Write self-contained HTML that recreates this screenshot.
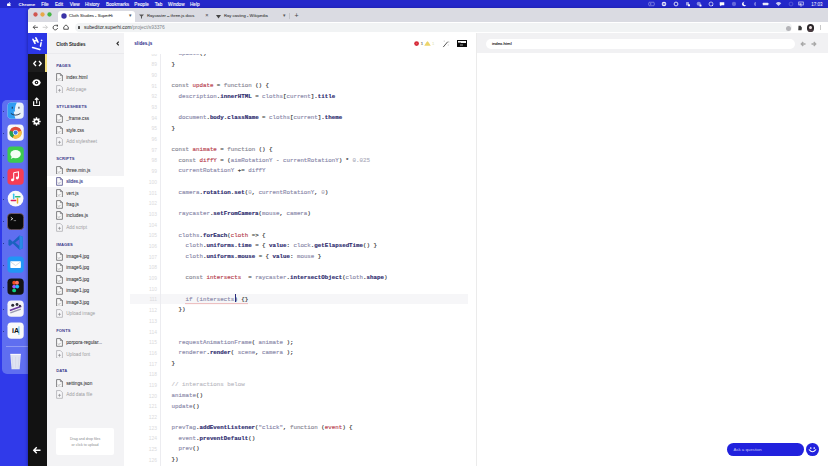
<!DOCTYPE html><html><head><meta charset="utf-8"><style>
*{margin:0;padding:0;box-sizing:border-box}
html,body{width:828px;height:466px;overflow:hidden}
body{background:#303aea;font-family:"Liberation Sans",sans-serif;position:relative}
#root{left:0;top:0;width:828px;height:466px}
div,span,svg{position:absolute}
.t{white-space:nowrap;line-height:1}
#menubar{left:0;top:0;width:828px;height:8px;background:#2428ca;color:#fff}
#menubar .t{font-size:4.65px;top:3.0px}
#dock{left:1.5px;top:99.8px;width:40px;height:274.6px;border-radius:5px;background:#5f6ef0}
.di{left:5.5px;width:17.5px;height:17.5px;border-radius:4px;overflow:hidden}
#win{left:28px;top:8px;width:800px;height:458px;background:#fff;border-top-left-radius:4px;overflow:hidden;box-shadow:-1px 0 3px rgba(0,0,60,.3)}
#tabs{left:0;top:0;width:800px;height:14px;background:#dadbe2}
#toolbar{left:0;top:14px;width:800px;height:11px;background:#fff}
#content{left:0;top:26px;width:800px;height:432px;background:#fff;overflow:visible}
#iconbar{left:0;top:0;width:19px;height:432px;background:#121212}
#logo{left:0;top:0;width:19px;height:20px;background:#2b36e6}
#sidebar{left:19px;top:0;width:77px;height:432px;background:#f3f3f5}
#editor{left:96px;top:0;width:352px;height:432px;background:#fff;overflow:hidden}
#preview{left:448px;top:0;width:352px;height:432px;background:#fff;border-left:1px solid #ebebeb}
.sh{font-size:4.1px;font-weight:bold;color:#3b3a8c;letter-spacing:0.1px}
.si{font-size:4.7px;color:#36363a;-webkit-text-stroke:0.06px #36363a}
.sa{font-size:4.7px;color:#9c9ca0}
.code span{position:static}
.code{font-family:"Liberation Mono",monospace;font-size:5.8px;line-height:1;white-space:pre;-webkit-text-stroke:0.15px currentColor}
.ln{font-family:"Liberation Sans",sans-serif;font-size:4.9px;color:#dadadc;text-align:right;width:20px;line-height:1}
.k{color:#8a8a96}
.d{color:#b84452}
.p{color:#2d2b6e;font-weight:bold}
.i{color:#8c8bab}
.o{color:#333}
.n{color:#b0b0c0}
.c{color:#bdbdc5}
.s{color:#8584a8}
</style></head><body><div id="root">
<div id="menubar">
<svg style="left:7px;top:1.600px" width="4" height="4.8" viewBox="0 0 10 12"><path fill="#fff" d="M8.3 6.4c0-1.5 1.2-2.2 1.3-2.3-.7-1-1.8-1.2-2.2-1.2-.9-.1-1.8.6-2.3.6s-1.2-.5-2-.5C2 3 1 3.6.5 4.600-.6 6.600.2 9.500 1.200 11c.5.7 1.1 1.500 1.900 1.500.8 0 1-.5 2-.5s1.200.5 2 .5 1.300-.7 1.800-1.500c.6-.8.800-1.600.8-1.700 0 0-1.600-.6-1.600-2.500zM6.800 1.900C7.200 1.400 7.500.7 7.400 0c-.6 0-1.400.4-1.800.9-.4.4-.7 1.100-.6 1.800.7.1 1.400-.3 1.800-.8z"/></svg>
<span class="t" style="left:18.6px;font-weight:bold;font-size:4.4px;">Chrome</span>
<span class="t" style="left:41.2px;font-size:4.65px;-webkit-text-stroke:0.1px #fff;">File</span>
<span class="t" style="left:55.0px;font-size:4.65px;-webkit-text-stroke:0.1px #fff;">Edit</span>
<span class="t" style="left:69.7px;font-size:4.65px;-webkit-text-stroke:0.1px #fff;">View</span>
<span class="t" style="left:85.0px;font-size:4.65px;-webkit-text-stroke:0.1px #fff;">History</span>
<span class="t" style="left:105.9px;font-size:4.65px;-webkit-text-stroke:0.1px #fff;">Bookmarks</span>
<span class="t" style="left:134.3px;font-size:4.65px;-webkit-text-stroke:0.1px #fff;">People</span>
<span class="t" style="left:154.8px;font-size:4.65px;-webkit-text-stroke:0.1px #fff;">Tab</span>
<span class="t" style="left:168.0px;font-size:4.65px;-webkit-text-stroke:0.1px #fff;">Window</span>
<span class="t" style="left:190.0px;font-size:4.65px;-webkit-text-stroke:0.1px #fff;">Help</span>
<svg style="left:648.2px;top:1px" width="7.0" height="6" viewBox="0 0 14 12"><rect x="1.500" y="2.500" width="11" height="7" rx="1.500" fill="none" stroke="rgba(255,255,255,.6)" stroke-width="1.200"/><circle cx="5.500" cy="6" r="1.300" fill="rgba(255,255,255,.6)"/></svg>
<svg style="left:660.5px;top:1px" width="6.0" height="6" viewBox="0 0 12 12"><circle cx="6" cy="6" r="4.600" fill="rgba(255,255,255,.9)"/><rect x="3.500" y="4.800" width="5" height="2.400" fill="#3a3ad0"/></svg>
<svg style="left:672.6px;top:1px" width="6.0" height="6" viewBox="0 0 12 12"><circle cx="6" cy="6" r="3.800" fill="none" stroke="rgba(255,255,255,.8)" stroke-width="2"/></svg>
<svg style="left:685.3px;top:1px" width="6.0" height="6" viewBox="0 0 12 12"><rect x="2" y="2" width="6" height="7" rx="1" fill="rgba(255,255,255,.55)"/><rect x="6" y="6.500" width="4" height="4" rx="1" fill="#fff"/></svg>
<svg style="left:696.2px;top:1px" width="6.0" height="6" viewBox="0 0 12 12"><circle cx="5.500" cy="5.500" r="4.200" fill="rgba(255,255,255,.45)"/><rect x="7" y="7" width="4" height="4" rx="1" fill="#fff"/></svg>
<svg style="left:708.3px;top:1px" width="6.0" height="6" viewBox="0 0 12 12"><circle cx="6" cy="6" r="4" fill="none" stroke="rgba(255,255,255,.85)" stroke-width="1.500"/><path d="M8 8l2 2" stroke="#fff" stroke-width="1.500"/></svg>
<svg style="left:719.1px;top:1px" width="6.0" height="6" viewBox="0 0 12 12"><path d="M1.500 2.500h9v6h-5l-3 2v-2h-1z" fill="#fff"/></svg>
<svg style="left:730.5px;top:1px" width="6.0" height="6" viewBox="0 0 12 12"><circle cx="6" cy="6" r="4.300" fill="rgba(255,255,255,.3)"/></svg>
<svg style="left:740.7px;top:1px" width="6.0" height="6" viewBox="0 0 12 12"><path d="M7 1.500A4.500 4.500 0 1 0 10.500 8 3.600 3.600 0 0 1 7 1.500z" fill="#fff"/></svg>
<svg style="left:752.6px;top:1px" width="4.0" height="6" viewBox="0 0 8 12"><path d="M2 4l4 4-2 2V2l2 2-4 4" stroke="rgba(255,255,255,.5)" stroke-width="1" fill="none"/></svg>
<svg style="left:762.0px;top:1px" width="8.0" height="6" viewBox="0 0 16 12"><rect x="1.500" y="3.500" width="11" height="5" rx="1" fill="rgba(255,255,255,.9)"/><rect x="13" y="5" width="1.300" height="2" fill="rgba(255,255,255,.7)"/></svg>
<svg style="left:775.2px;top:1px" width="7.0" height="6" viewBox="0 0 14 12"><path d="M7 10L1.500 4.500Q7 -1 12.500 4.500z" fill="rgba(255,255,255,.75)"/></svg>
<svg style="left:787.8px;top:1px" width="6.0" height="6" viewBox="0 0 12 12"><circle cx="6" cy="6" r="3.800" fill="none" stroke="rgba(255,255,255,.35)" stroke-width="1.200"/></svg>
<svg style="left:798.0px;top:1px" width="6.0" height="6" viewBox="0 0 12 12"><rect x="1.500" y="2" width="9" height="6" fill="none" stroke="rgba(255,255,255,.9)" stroke-width="1.300"/><rect x="3" y="5" width="4" height="2.300" fill="#fff"/><path d="M4 10h4" stroke="#fff" stroke-width="1"/></svg>
<span class="t" style="left:811.2px;top:2.6px;font-size:4.5px">17:03</span>
</div>
<div id="dock">
<svg style="left:5.8px;top:2.3px" width="17.2" height="17.2" viewBox="0 0 36 36"><clipPath id="fc"><rect x="1" y="1" width="34" height="34" rx="8"/></clipPath><g clip-path="url(#fc)"><rect x="0" y="0" width="36" height="36" fill="#eaf2fa"/><path d="M0 0H21Q15 12 17 20H14Q15 28 18 36H0z" fill="#2f9cf2"/><path d="M11 10v4M25 10v4" stroke="#1d2a44" stroke-width="2"/><path d="M8 24Q18 31 28 24" stroke="#1d2a44" stroke-width="1.8" fill="none"/></g></svg>
<svg style="left:5.8px;top:24.7px" width="17.2" height="17.2" viewBox="0 0 36 36"><rect x="1" y="1" width="34" height="34" rx="8" fill="#f7f7f7"/><circle cx="18" cy="18" r="12.500" fill="#de4a3a"/><path d="M18 18L6 14A12.500 12.500 0 0 0 12 29z" fill="#2ba14a"/><path d="M18 18L12 29A12.500 12.500 0 0 0 30 14z" fill="#f6c343"/><circle cx="18" cy="18" r="5.600" fill="#fff"/><circle cx="18" cy="18" r="4.300" fill="#3b7de0"/></svg>
<svg style="left:5.8px;top:46.6px" width="17.2" height="17.2" viewBox="0 0 36 36"><rect x="1" y="1" width="34" height="34" rx="8" fill="#3ccb4e"/><ellipse cx="18" cy="17" rx="11" ry="8.5" fill="#f4fff4"/><path d="M10 22l-2 5 6-3z" fill="#f4fff4"/></svg>
<svg style="left:5.8px;top:68.4px" width="17.2" height="17.2" viewBox="0 0 36 36"><rect x="1" y="1" width="34" height="34" rx="8" fill="#f53d55"/><path d="M14 10l10-2v13" stroke="#fff" stroke-width="2.2" fill="none"/><path d="M14 10v15" stroke="#fff" stroke-width="2.2"/><circle cx="11.5" cy="25" r="3" fill="#fff"/><circle cx="21.5" cy="21" r="3" fill="#fff"/></svg>
<svg style="left:5.8px;top:90.7px" width="17.2" height="17.2" viewBox="0 0 36 36"><circle cx="18" cy="18" r="16.5" fill="#fafafa"/><g stroke-width="3.2" stroke-linecap="round"><path d="M14 9v9" stroke="#36c5f0"/><path d="M9 22h9" stroke="#e01e5a"/><path d="M22 27v-9" stroke="#ecb22e"/><path d="M27 14h-9" stroke="#2eb67d"/></g></svg>
<svg style="left:5.8px;top:113.0px" width="17.2" height="17.2" viewBox="0 0 36 36"><rect x="1" y="1" width="34" height="34" rx="8" fill="#0c0c0c" stroke="#8a6a6a" stroke-width="1.5"/><path d="M8 9l4 3-4 3" stroke="#fff" stroke-width="1.8" fill="none"/><path d="M14 16h5" stroke="#aaa" stroke-width="1.5"/></svg>
<svg style="left:5.8px;top:134.2px" width="17.2" height="17.2" viewBox="0 0 36 36"><path d="M26 3L12 16 6 11 3 13v10l3 2 6-5 14 13 7-3V6z" fill="#1a62c0"/><path d="M26 3l7 3v24l-7 3z" fill="#2a8ae8"/><path d="M26 11v14l-9-7z" fill="#5a63e6"/></svg>
<svg style="left:5.8px;top:156.3px" width="17.2" height="17.2" viewBox="0 0 36 36"><rect x="1" y="1" width="34" height="34" rx="8" fill="#2196f5"/><rect x="7" y="11" width="22" height="14" rx="1.5" fill="#fff"/><path d="M7 12l11 8 11-8" stroke="#b9c7d6" stroke-width="1.4" fill="none"/></svg>
<svg style="left:5.8px;top:178.6px" width="17.2" height="17.2" viewBox="0 0 36 36"><rect x="1" y="1" width="34" height="34" rx="8" fill="#141414"/><circle cx="15" cy="10" r="4" fill="#f24e1e"/><circle cx="21" cy="10" r="4" fill="#ff7262"/><circle cx="15" cy="18" r="4" fill="#a259ff"/><circle cx="21.500" cy="18" r="4" fill="#1abcfe"/><circle cx="15" cy="26" r="4" fill="#0acf83"/></svg>
<svg style="left:5.8px;top:200.6px" width="17.2" height="17.2" viewBox="0 0 36 36"><rect x="1" y="1" width="34" height="34" rx="8" fill="#f4f4f8"/><circle cx="12" cy="11" r="3.200" fill="#2a2a35"/><circle cx="21" cy="9.500" r="3" fill="#2a2a35"/><path d="M6 22L30 13" stroke="#6a3aa0" stroke-width="3.500"/><path d="M7 27L29 19" stroke="#9a9ab0" stroke-width="3"/><circle cx="27" cy="12" r="2.200" fill="#2a2a35"/></svg>
<svg style="left:5.8px;top:222.3px" width="17.2" height="17.2" viewBox="0 0 36 36"><rect x="1" y="1" width="34" height="34" rx="8" fill="#fafafa"/><text x="18" y="24" font-family="Liberation Sans" font-weight="bold" font-size="15" text-anchor="middle" fill="#111">iA</text><path d="M25 9v18" stroke="#1fa0e0" stroke-width="1.5"/></svg>
<div style="left:4px;top:246.5px;width:30px;height:0.6px;background:rgba(255,255,255,.3)"></div>
<svg style="left:5.8px;top:253.6px" width="17.2" height="17.2" viewBox="0 0 36 36"><path d="M7 3h22l-2.500 31H9.500z" fill="#dfe3f2"/><path d="M7 3h22" stroke="#f8f8fc" stroke-width="2.500"/><path d="M11 8l1.500 23M18 8v23M25 8l-1.500 23" stroke="#c9cde0" stroke-width="0.800"/></svg>
<div style="left:1.2px;top:11.0px;width:1.1px;height:1.1px;border-radius:50%;background:#1c2a70"></div>
<div style="left:1.2px;top:33.0px;width:1.1px;height:1.1px;border-radius:50%;background:#1c2a70"></div>
<div style="left:1.2px;top:55.0px;width:1.1px;height:1.1px;border-radius:50%;background:#1c2a70"></div>
<div style="left:1.2px;top:77.0px;width:1.1px;height:1.1px;border-radius:50%;background:#1c2a70"></div>
<div style="left:1.2px;top:99.0px;width:1.1px;height:1.1px;border-radius:50%;background:#1c2a70"></div>
<div style="left:1.2px;top:121.0px;width:1.1px;height:1.1px;border-radius:50%;background:#1c2a70"></div>
<div style="left:1.2px;top:143.0px;width:1.1px;height:1.1px;border-radius:50%;background:#1c2a70"></div>
<div style="left:1.2px;top:165.0px;width:1.1px;height:1.1px;border-radius:50%;background:#1c2a70"></div>
<div style="left:1.2px;top:187.0px;width:1.1px;height:1.1px;border-radius:50%;background:#1c2a70"></div>
<div style="left:1.2px;top:209.0px;width:1.1px;height:1.1px;border-radius:50%;background:#1c2a70"></div>
<div style="left:1.2px;top:231.0px;width:1.1px;height:1.1px;border-radius:50%;background:#1c2a70"></div>
</div>
<div id="win">
<div id="tabs">
<svg style="left:5.20px;top:4.400px" width="5" height="5" viewBox="0 0 10 10"><circle cx="5" cy="5" r="4.300" fill="#d05650"/></svg>
<svg style="left:11.90px;top:4.400px" width="5" height="5" viewBox="0 0 10 10"><circle cx="5" cy="5" r="4.300" fill="#e8a848"/></svg>
<svg style="left:18.50px;top:4.400px" width="5" height="5" viewBox="0 0 10 10"><circle cx="5" cy="5" r="4.300" fill="#45b545"/></svg>
<div style="left:30px;top:2.5px;width:77px;height:11.5px;background:#fff;border-radius:3px 3px 0 0"></div>
<svg style="left:33.3px;top:5.2px" width="6" height="6" viewBox="0 0 12 12"><circle cx="6" cy="6" r="5.400" fill="#3b33a6"/></svg>
<span class="t" style="left:41px;top:6.1px;font-size:4.2px;color:#3c3c3c;-webkit-text-stroke:0.08px #3c3c3c">Cloth Studies - SuperHi</span>
<span class="t" style="left:100.5px;top:5.6px;font-size:4.5px;color:#555">&#x25BE;</span>
<svg style="left:110.5px;top:5.6px" width="5" height="5" viewBox="0 0 10 10"><path d="M0 1h10L6 5v4H4V5z" fill="#555"/></svg>
<span class="t" style="left:119px;top:6.1px;font-size:4.2px;color:#444;-webkit-text-stroke:0.08px #444">Raycaster – three.js docs</span>
<span class="t" style="left:177.3px;top:5.4px;font-size:5.6px;color:#444">&#xd7;</span>

<svg style="left:187.5px;top:5.6px" width="5" height="5" viewBox="0 0 10 10"><path d="M0 2h10L5 9z" fill="#444"/></svg>
<span class="t" style="left:196px;top:6.1px;font-size:4.2px;color:#444;-webkit-text-stroke:0.08px #444">Ray casting - Wikipedia</span>
<span class="t" style="left:254.5px;top:5.6px;font-size:4.5px;color:#555">&#x25BE;</span>
<div style="left:261px;top:4.5px;width:0.6px;height:6px;background:#c2c4c9"></div>
<span class="t" style="left:266.5px;top:4.2px;font-size:7px;color:#444">+</span>
</div>
<div id="toolbar">
<svg style="left:3.6px;top:2.3px" width="6.6" height="6.6" viewBox="0 0 14 14"><path d="M12.500 7H2.500M7 2.500L2.500 7 7 11.500" stroke="#454545" stroke-width="1.900" fill="none"/></svg>
<svg style="left:14.2px;top:2.3px" width="6.6" height="6.6" viewBox="0 0 14 14"><path d="M1.500 7h10M7 2.500l4.500 4.500L7 11.500" stroke="#c8c8c8" stroke-width="1.900" fill="none"/></svg>
<svg style="left:24.300px;top:2.300px" width="6.6" height="6.6" viewBox="0 0 14 14"><path d="M11.200 5.200A4.800 4.800 0 1 0 11.800 8.500" stroke="#454545" stroke-width="2" fill="none"/><path d="M8.500 1.500h4.300v4.300z" fill="#454545"/></svg>
<svg style="left:34.600px;top:2.300px" width="6" height="6" viewBox="0 0 12 12"><path d="M1.500 5.800L6 1.800l4.500 4v4.700h-9z" stroke="#454545" stroke-width="1.800" fill="none" stroke-linejoin="round"/></svg>
<div style="left:47px;top:0.8px;width:717.4px;height:9.5px;border-radius:4.8px;background:#f1f3f4"></div>
<div style="left:49.5px;top:4.3px;width:2.4px;height:2.6px;border-radius:0.5px;background:#505050"></div>
<span class="t" style="left:56px;top:4.3px;font-size:4.87px;color:#202124">subeditor.superhi.com<span style="position:static;color:#80868b">/project/s93376</span></span>
<div style="left:757.5px;top:3.5px;width:5.6px;height:5.6px;border-radius:50%;background:#b4b4b8"></div>
<svg style="left:769.200px;top:3px" width="6" height="6" viewBox="0 0 12 12"><path d="M3 1.500h4l3 4-1 5H2.500z" fill="#3c3c3c"/></svg>
<div style="left:778.800px;top:2.300px;width:7.4px;height:7.4px;border-radius:50%;background:#2a2628;overflow:hidden"><div style="left:2.6px;top:1.8px;width:2.8px;height:3.4px;border-radius:50%;background:#e8dcdc"></div><div style="left:1.5px;top:5px;width:4.6px;height:3px;border-radius:50%;background:#4a3a40"></div></div>
<div style="left:792.300px;top:3.200px;width:0.7px;height:5.2px;background:#c8c8c8"></div>
</div>
<div id="content">
<div style="left:0;top:-1px;width:19px;height:1px;background:#2b36e6"></div>
<div style="left:19px;top:-1px;width:77px;height:1px;background:#f3f3f5"></div>
<div style="left:449px;top:-1px;width:351px;height:1px;background:#f1f1f3"></div>
<div style="left:448px;top:-1px;width:1px;height:1px;background:#ebebeb"></div>
<div id="iconbar"><div id="logo">
<svg style="left:0;top:0" width="19" height="20" viewBox="0 0 19 20"><g stroke="#fff" stroke-linecap="round" fill="none"><path d="M5 5.300L7 9.300M7.900 3.800L10 8.100M6.100 7.300L9.200 6" stroke-width="1.6"/><path d="M13.100 8.800L12.500 12.200" stroke-width="1.5"/><path d="M13.600 6.400l.1 .1" stroke-width="1.7"/><path d="M4.600 13.500L11.800 15.600" stroke-width="1.6"/></g></svg>
</div>
<div style="left:0;top:20px;width:19px;height:18px;background:#1c1c1c"></div>
<div style="left:17.3px;top:20px;width:1.7px;height:18px;background:#f3df7a"></div>
<svg style="left:5px;top:25.5px" width="9" height="7" viewBox="0 0 18 14"><path d="M6 2L1.5 7 6 12M12 2l4.5 5L12 12" stroke="#fff" stroke-width="2.6" fill="none" stroke-linejoin="round"/></svg>
<svg style="left:4px;top:44.800px" width="9" height="7" viewBox="0 0 18 14"><path d="M0.600 7C2.200 -2 15.800 -2 17.400 7C15.800 16 2.200 16 0.600 7z" fill="#fff"/><circle cx="9" cy="7" r="3.500" fill="#121212"/><circle cx="9" cy="7" r="1.400" fill="#fff"/></svg>
<svg style="left:5px;top:63.100px" width="7.4" height="9.2" viewBox="0 0 14.800 18.400"><path d="M1.300 8.500v8.600h12.200V8.500" stroke="#fff" stroke-width="2.400" fill="none"/><path d="M7.400 13V2.500M3.800 5.800L7.400 2.200l3.600 3.600" stroke="#fff" stroke-width="2.300" fill="none"/></svg>
<svg style="left:3.900px;top:83.200px" width="9" height="9" viewBox="0 0 20 20"><g fill="#fff"><circle cx="10" cy="10" r="6.400"/><rect x="8.300" y="0.800" width="3.400" height="18.400" rx=".6"/><rect x="8.300" y="0.800" width="3.400" height="18.400" rx=".6" transform="rotate(45 10 10)"/><rect x="8.300" y="0.800" width="3.400" height="18.400" rx=".6" transform="rotate(90 10 10)"/><rect x="8.300" y="0.800" width="3.400" height="18.400" rx=".6" transform="rotate(135 10 10)"/></g><circle cx="10" cy="10" r="3" fill="#121212"/></svg>
<svg style="left:4.200px;top:411.500px" width="9.5" height="8.5" viewBox="0 0 19 17"><path d="M17 8.500H4M9.500 2.500L3.500 8.500l6 6" stroke="#fff" stroke-width="2.800" fill="none"/></svg>
</div>
<div id="sidebar">
<span class="t" style="left:9.2px;top:8.8px;font-size:4.56px;font-weight:bold;color:#222">Cloth Studies</span>
<svg style="left:69px;top:6.9px" width="3.5" height="5" viewBox="0 0 7 10"><path d="M5.5 1.200L2 5l3.500 3.800" stroke="#2a2a2a" stroke-width="2.300" fill="none"/></svg>
<div style="left:0;top:18.6px;width:77px;height:0.5px;background:#eaeaed"></div>
<span class="t sh" style="left:9.2px;top:30.0px">PAGES</span>
<svg style="left:8.6px;top:38.6px" width="7" height="8.9" viewBox="0 0 12 15.300"><path d="M1 1h6.500L11 4.500V14.300H1z" fill="#fafafa" stroke="#505054" stroke-width="1.200"/><path d="M7.500 1v3.500H11" fill="none" stroke="#505054" stroke-width="1"/><path d="M3.500 9.500l1.500 1.800 3-3" stroke="#808084" stroke-width="1" fill="none"/></svg>
<span class="t si" style="left:19.2px;top:41.6px">index.html</span>
<svg style="left:8.6px;top:50.6px" width="7" height="8.9" viewBox="0 0 12 15.300"><path d="M1 1h6.500L11 4.500V14.300H1z" fill="#f7f7f9" stroke="#9c9ca0" stroke-width="1.100"/><path d="M6 6.600v5M3.500 9.100h5" stroke="#8a8a8e" stroke-width="1.200"/></svg>
<span class="t sa" style="left:19.2px;top:53.6px">Add page</span>
<span class="t sh" style="left:9.2px;top:70.8px">STYLESHEETS</span>
<svg style="left:8.6px;top:80.3px" width="7" height="8.9" viewBox="0 0 12 15.300"><path d="M1 1h6.500L11 4.500V14.300H1z" fill="#fafafa" stroke="#505054" stroke-width="1.200"/><path d="M7.500 1v3.500H11" fill="none" stroke="#505054" stroke-width="1"/><path d="M3.500 9.500l1.500 1.800 3-3" stroke="#808084" stroke-width="1" fill="none"/></svg>
<span class="t si" style="left:19.2px;top:83.3px">_frame.css</span>
<svg style="left:8.6px;top:91.6px" width="7" height="8.9" viewBox="0 0 12 15.300"><path d="M1 1h6.500L11 4.500V14.300H1z" fill="#fafafa" stroke="#505054" stroke-width="1.200"/><path d="M7.500 1v3.500H11" fill="none" stroke="#505054" stroke-width="1"/><path d="M3.500 9.500l1.500 1.800 3-3" stroke="#808084" stroke-width="1" fill="none"/></svg>
<span class="t si" style="left:19.2px;top:94.6px">style.css</span>
<svg style="left:8.6px;top:102.9px" width="7" height="8.9" viewBox="0 0 12 15.300"><path d="M1 1h6.500L11 4.500V14.300H1z" fill="#f7f7f9" stroke="#9c9ca0" stroke-width="1.100"/><path d="M6 6.600v5M3.500 9.100h5" stroke="#8a8a8e" stroke-width="1.200"/></svg>
<span class="t sa" style="left:19.2px;top:105.9px">Add stylesheet</span>
<span class="t sh" style="left:9.2px;top:123.1px">SCRIPTS</span>
<svg style="left:8.6px;top:131.6px" width="7" height="8.9" viewBox="0 0 12 15.300"><path d="M1 1h6.500L11 4.500V14.300H1z" fill="#fafafa" stroke="#505054" stroke-width="1.200"/><path d="M7.500 1v3.500H11" fill="none" stroke="#505054" stroke-width="1"/><path d="M3.500 9.500l1.500 1.800 3-3" stroke="#808084" stroke-width="1" fill="none"/></svg>
<span class="t si" style="left:19.2px;top:134.6px">three.min.js</span>
<div style="left:0;top:142.0px;width:77px;height:10.6px;background:#fff"></div>
<svg style="left:8.6px;top:142.9px" width="7" height="8.9" viewBox="0 0 12 15.300"><path d="M1 1h6.500L11 4.500V14.300H1z" fill="#fafafa" stroke="#3b3a7e" stroke-width="1.200"/><path d="M7.500 1v3.500H11" fill="none" stroke="#3b3a7e" stroke-width="1"/><path d="M3.500 9.500l1.500 1.800 3-3" stroke="#6a6a9e" stroke-width="1" fill="none"/></svg>
<span class="t si" style="left:19.2px;top:145.9px;color:#3b3a8c;-webkit-text-stroke:0.12px #3b3a8c">slides.js</span>
<svg style="left:8.6px;top:154.5px" width="7" height="8.9" viewBox="0 0 12 15.300"><path d="M1 1h6.500L11 4.500V14.300H1z" fill="#fafafa" stroke="#505054" stroke-width="1.200"/><path d="M7.500 1v3.500H11" fill="none" stroke="#505054" stroke-width="1"/><path d="M3.500 9.500l1.500 1.800 3-3" stroke="#808084" stroke-width="1" fill="none"/></svg>
<span class="t si" style="left:19.2px;top:157.5px">vert.js</span>
<svg style="left:8.6px;top:166.0px" width="7" height="8.9" viewBox="0 0 12 15.300"><path d="M1 1h6.500L11 4.500V14.300H1z" fill="#fafafa" stroke="#505054" stroke-width="1.200"/><path d="M7.500 1v3.500H11" fill="none" stroke="#505054" stroke-width="1"/><path d="M3.500 9.500l1.500 1.800 3-3" stroke="#808084" stroke-width="1" fill="none"/></svg>
<span class="t si" style="left:19.2px;top:169.0px">frag.js</span>
<svg style="left:8.6px;top:177.4px" width="7" height="8.9" viewBox="0 0 12 15.300"><path d="M1 1h6.500L11 4.500V14.300H1z" fill="#fafafa" stroke="#505054" stroke-width="1.200"/><path d="M7.500 1v3.500H11" fill="none" stroke="#505054" stroke-width="1"/><path d="M3.500 9.500l1.500 1.800 3-3" stroke="#808084" stroke-width="1" fill="none"/></svg>
<span class="t si" style="left:19.2px;top:180.4px">includes.js</span>
<svg style="left:8.6px;top:188.8px" width="7" height="8.9" viewBox="0 0 12 15.300"><path d="M1 1h6.500L11 4.500V14.300H1z" fill="#f7f7f9" stroke="#9c9ca0" stroke-width="1.100"/><path d="M6 6.600v5M3.500 9.100h5" stroke="#8a8a8e" stroke-width="1.200"/></svg>
<span class="t sa" style="left:19.2px;top:191.8px">Add script</span>
<span class="t sh" style="left:9.2px;top:209.1px">IMAGES</span>
<svg style="left:8.6px;top:217.9px" width="7" height="8.9" viewBox="0 0 12 15.300"><path d="M1 1h6.500L11 4.500V14.300H1z" fill="#fafafa" stroke="#505054" stroke-width="1.200"/><path d="M7.500 1v3.500H11" fill="none" stroke="#505054" stroke-width="1"/><path d="M3.500 9.500l1.500 1.800 3-3" stroke="#808084" stroke-width="1" fill="none"/></svg>
<span class="t si" style="left:19.2px;top:220.9px">image4.jpg</span>
<svg style="left:8.6px;top:229.4px" width="7" height="8.9" viewBox="0 0 12 15.300"><path d="M1 1h6.500L11 4.500V14.300H1z" fill="#fafafa" stroke="#505054" stroke-width="1.200"/><path d="M7.500 1v3.500H11" fill="none" stroke="#505054" stroke-width="1"/><path d="M3.500 9.500l1.500 1.800 3-3" stroke="#808084" stroke-width="1" fill="none"/></svg>
<span class="t si" style="left:19.2px;top:232.4px">image6.jpg</span>
<svg style="left:8.6px;top:240.8px" width="7" height="8.9" viewBox="0 0 12 15.300"><path d="M1 1h6.500L11 4.500V14.300H1z" fill="#fafafa" stroke="#505054" stroke-width="1.200"/><path d="M7.500 1v3.500H11" fill="none" stroke="#505054" stroke-width="1"/><path d="M3.500 9.500l1.500 1.800 3-3" stroke="#808084" stroke-width="1" fill="none"/></svg>
<span class="t si" style="left:19.2px;top:243.8px">image5.jpg</span>
<svg style="left:8.6px;top:252.2px" width="7" height="8.9" viewBox="0 0 12 15.300"><path d="M1 1h6.500L11 4.500V14.300H1z" fill="#fafafa" stroke="#505054" stroke-width="1.200"/><path d="M7.500 1v3.500H11" fill="none" stroke="#505054" stroke-width="1"/><path d="M3.500 9.500l1.500 1.800 3-3" stroke="#808084" stroke-width="1" fill="none"/></svg>
<span class="t si" style="left:19.2px;top:255.2px">image1.jpg</span>
<svg style="left:8.6px;top:263.6px" width="7" height="8.9" viewBox="0 0 12 15.300"><path d="M1 1h6.500L11 4.500V14.300H1z" fill="#fafafa" stroke="#505054" stroke-width="1.200"/><path d="M7.500 1v3.500H11" fill="none" stroke="#505054" stroke-width="1"/><path d="M3.500 9.500l1.500 1.800 3-3" stroke="#808084" stroke-width="1" fill="none"/></svg>
<span class="t si" style="left:19.2px;top:266.6px">image3.jpg</span>
<svg style="left:8.6px;top:275.1px" width="7" height="8.9" viewBox="0 0 12 15.300"><path d="M1 1h6.500L11 4.500V14.300H1z" fill="#f7f7f9" stroke="#9c9ca0" stroke-width="1.100"/><path d="M6 6.600v5M3.500 9.100h5" stroke="#8a8a8e" stroke-width="1.200"/></svg>
<span class="t sa" style="left:19.2px;top:278.1px">Upload image</span>
<span class="t sh" style="left:9.2px;top:295.4px">FONTS</span>
<svg style="left:8.6px;top:304.2px" width="7" height="8.9" viewBox="0 0 12 15.300"><path d="M1 1h6.500L11 4.500V14.300H1z" fill="#fafafa" stroke="#505054" stroke-width="1.200"/><path d="M7.500 1v3.500H11" fill="none" stroke="#505054" stroke-width="1"/><path d="M3.500 9.500l1.500 1.800 3-3" stroke="#808084" stroke-width="1" fill="none"/></svg>
<span class="t si" style="left:19.2px;top:307.2px">porpora-regular...</span>
<svg style="left:8.6px;top:315.5px" width="7" height="8.9" viewBox="0 0 12 15.300"><path d="M1 1h6.500L11 4.500V14.300H1z" fill="#f7f7f9" stroke="#9c9ca0" stroke-width="1.100"/><path d="M6 6.600v5M3.500 9.100h5" stroke="#8a8a8e" stroke-width="1.200"/></svg>
<span class="t sa" style="left:19.2px;top:318.5px">Upload font</span>
<span class="t sh" style="left:9.2px;top:335.4px">DATA</span>
<svg style="left:8.6px;top:344.6px" width="7" height="8.9" viewBox="0 0 12 15.300"><path d="M1 1h6.500L11 4.500V14.300H1z" fill="#fafafa" stroke="#505054" stroke-width="1.200"/><path d="M7.500 1v3.500H11" fill="none" stroke="#505054" stroke-width="1"/><path d="M3.500 9.500l1.500 1.800 3-3" stroke="#808084" stroke-width="1" fill="none"/></svg>
<span class="t si" style="left:19.2px;top:347.6px">settings.json</span>
<svg style="left:8.6px;top:356.0px" width="7" height="8.9" viewBox="0 0 12 15.300"><path d="M1 1h6.500L11 4.500V14.300H1z" fill="#f7f7f9" stroke="#9c9ca0" stroke-width="1.100"/><path d="M6 6.600v5M3.500 9.100h5" stroke="#8a8a8e" stroke-width="1.200"/></svg>
<span class="t sa" style="left:19.2px;top:359.0px">Add data file</span>
<div style="left:8.8px;top:394px;width:58.6px;height:27.4px;border-radius:2px;background:#fff"></div>
<span class="t" style="left:8.8px;width:58.6px;text-align:center;top:404px;font-size:3.6px;color:#8a8a8e">Drag and drop files</span>
<span class="t" style="left:8.8px;width:58.6px;text-align:center;top:409.6px;font-size:3.6px;color:#8a8a8e">or click to upload</span>
</div>
<div id="editor">
<div class="ln" style="left:12.90px;top:15.57px;height:10.69px;line-height:10.69px;">88</div>
<div class="code" style="left:47.60px;top:14.87px;height:10.69px;line-height:10.69px">  <span class="i">update</span><span class="o">()</span></div>
<div class="ln" style="left:12.90px;top:26.26px;height:10.69px;line-height:10.69px;">89</div>
<div class="code" style="left:47.60px;top:25.56px;height:10.69px;line-height:10.69px"><span class="o">}</span></div>
<div class="ln" style="left:12.90px;top:36.95px;height:10.69px;line-height:10.69px;">90</div>
<div class="code" style="left:47.60px;top:36.25px;height:10.69px;line-height:10.69px"></div>
<div class="ln" style="left:12.90px;top:47.64px;height:10.69px;line-height:10.69px;">91</div>
<div class="code" style="left:47.60px;top:46.94px;height:10.69px;line-height:10.69px"><span class="k">const</span> <span class="d">update</span> <span class="o">=</span> <span class="k">function</span> <span class="o">() {</span></div>
<div class="ln" style="left:12.90px;top:58.33px;height:10.69px;line-height:10.69px;">92</div>
<div class="code" style="left:47.60px;top:57.62px;height:10.69px;line-height:10.69px">  <span class="i">description</span><span class="o">.</span><span class="p">innerHTML</span> <span class="o">=</span> <span class="i">cloths</span><span class="o">[</span><span class="i">current</span><span class="o">]</span><span class="o">.</span><span class="p">title</span></div>
<div class="ln" style="left:12.90px;top:69.02px;height:10.69px;line-height:10.69px;">93</div>
<div class="code" style="left:47.60px;top:68.31px;height:10.69px;line-height:10.69px"></div>
<div class="ln" style="left:12.90px;top:79.70px;height:10.69px;line-height:10.69px;">94</div>
<div class="code" style="left:47.60px;top:79.00px;height:10.69px;line-height:10.69px">  <span class="i">document</span><span class="o">.</span><span class="p">body</span><span class="o">.</span><span class="p">className</span> <span class="o">=</span> <span class="i">cloths</span><span class="o">[</span><span class="i">current</span><span class="o">]</span><span class="o">.</span><span class="p">theme</span></div>
<div class="ln" style="left:12.90px;top:90.40px;height:10.69px;line-height:10.69px;">95</div>
<div class="code" style="left:47.60px;top:89.70px;height:10.69px;line-height:10.69px"><span class="o">}</span></div>
<div class="ln" style="left:12.90px;top:101.09px;height:10.69px;line-height:10.69px;">96</div>
<div class="code" style="left:47.60px;top:100.39px;height:10.69px;line-height:10.69px"></div>
<div class="ln" style="left:12.90px;top:111.78px;height:10.69px;line-height:10.69px;">97</div>
<div class="code" style="left:47.60px;top:111.08px;height:10.69px;line-height:10.69px"><span class="k">const</span> <span class="d">animate</span> <span class="o">=</span> <span class="k">function</span> <span class="o">() {</span></div>
<div class="ln" style="left:12.90px;top:122.47px;height:10.69px;line-height:10.69px;">98</div>
<div class="code" style="left:47.60px;top:121.77px;height:10.69px;line-height:10.69px">  <span class="k">const</span> <span class="d">diffY</span> <span class="o">= (</span><span class="i">aimRotationY</span> <span class="o">-</span> <span class="i">currentRotationY</span><span class="o">) *</span> <span class="n">0.025</span></div>
<div class="ln" style="left:12.90px;top:133.16px;height:10.69px;line-height:10.69px;">99</div>
<div class="code" style="left:47.60px;top:132.46px;height:10.69px;line-height:10.69px">  <span class="i">currentRotationY</span> <span class="o">+=</span> <span class="i">diffY</span></div>
<div class="ln" style="left:12.90px;top:143.84px;height:10.69px;line-height:10.69px;">100</div>
<div class="code" style="left:47.60px;top:143.15px;height:10.69px;line-height:10.69px"></div>
<div class="ln" style="left:12.90px;top:154.53px;height:10.69px;line-height:10.69px;">101</div>
<div class="code" style="left:47.60px;top:153.84px;height:10.69px;line-height:10.69px">  <span class="i">camera</span><span class="o">.</span><span class="p">rotation</span><span class="o">.</span><span class="p">set</span><span class="o">(</span><span class="n">0</span><span class="o">,</span> <span class="i">currentRotationY</span><span class="o">,</span> <span class="n">0</span><span class="o">)</span></div>
<div class="ln" style="left:12.90px;top:165.22px;height:10.69px;line-height:10.69px;">102</div>
<div class="code" style="left:47.60px;top:164.53px;height:10.69px;line-height:10.69px"></div>
<div class="ln" style="left:12.90px;top:175.91px;height:10.69px;line-height:10.69px;">103</div>
<div class="code" style="left:47.60px;top:175.22px;height:10.69px;line-height:10.69px">  <span class="i">raycaster</span><span class="o">.</span><span class="p">setFromCamera</span><span class="o">(</span><span class="i">mouse</span><span class="o">,</span> <span class="i">camera</span><span class="o">)</span></div>
<div class="ln" style="left:12.90px;top:186.60px;height:10.69px;line-height:10.69px;">104</div>
<div class="code" style="left:47.60px;top:185.91px;height:10.69px;line-height:10.69px"></div>
<div class="ln" style="left:12.90px;top:197.29px;height:10.69px;line-height:10.69px;">105</div>
<div class="code" style="left:47.60px;top:196.59px;height:10.69px;line-height:10.69px">  <span class="i">cloths</span><span class="o">.</span><span class="p">forEach</span><span class="o">(</span><span class="d">cloth</span> <span class="o">=&gt; {</span></div>
<div class="ln" style="left:12.90px;top:207.98px;height:10.69px;line-height:10.69px;">106</div>
<div class="code" style="left:47.60px;top:207.28px;height:10.69px;line-height:10.69px">    <span class="i">cloth</span><span class="o">.</span><span class="p">uniforms</span><span class="o">.</span><span class="p">time</span> <span class="o">= {</span> <span class="p">value</span><span class="o">:</span> <span class="i">clock</span><span class="o">.</span><span class="p">getElapsedTime</span><span class="o">() }</span></div>
<div class="ln" style="left:12.90px;top:218.67px;height:10.69px;line-height:10.69px;">107</div>
<div class="code" style="left:47.60px;top:217.97px;height:10.69px;line-height:10.69px">    <span class="i">cloth</span><span class="o">.</span><span class="p">uniforms</span><span class="o">.</span><span class="p">mouse</span> <span class="o">= {</span> <span class="p">value</span><span class="o">:</span> <span class="i">mouse</span> <span class="o">}</span></div>
<div class="ln" style="left:12.90px;top:229.36px;height:10.69px;line-height:10.69px;">108</div>
<div class="code" style="left:47.60px;top:228.66px;height:10.69px;line-height:10.69px"></div>
<div class="ln" style="left:12.90px;top:240.05px;height:10.69px;line-height:10.69px;">109</div>
<div class="code" style="left:47.60px;top:239.35px;height:10.69px;line-height:10.69px">    <span class="k">const</span> <span class="d">intersects</span>  <span class="o">=</span> <span class="i">raycaster</span><span class="o">.</span><span class="p">intersectObject</span><span class="o">(</span><span class="i">cloth</span><span class="o">.</span><span class="p">shape</span><span class="o">)</span></div>
<div class="ln" style="left:12.90px;top:250.74px;height:10.69px;line-height:10.69px;">110</div>
<div class="code" style="left:47.60px;top:250.04px;height:10.69px;line-height:10.69px"></div>
<div style="left:6px;top:260.20px;width:338px;height:9.6px;background:#f6f6f8"></div>
<div class="ln" style="left:12.90px;top:261.43px;height:10.69px;line-height:10.69px;">111</div>
<div class="code" style="left:47.60px;top:260.73px;height:10.69px;line-height:10.69px">    <span class="i">if (intersects</span><span class="o">) {}</span></div>
<div class="ln" style="left:12.90px;top:272.12px;height:10.69px;line-height:10.69px;">112</div>
<div class="code" style="left:47.60px;top:271.42px;height:10.69px;line-height:10.69px">  <span class="o">})</span></div>
<div class="ln" style="left:12.90px;top:282.81px;height:10.69px;line-height:10.69px;">113</div>
<div class="code" style="left:47.60px;top:282.12px;height:10.69px;line-height:10.69px"></div>
<div class="ln" style="left:12.90px;top:293.50px;height:10.69px;line-height:10.69px;">114</div>
<div class="code" style="left:47.60px;top:292.81px;height:10.69px;line-height:10.69px"></div>
<div class="ln" style="left:12.90px;top:304.19px;height:10.69px;line-height:10.69px;">115</div>
<div class="code" style="left:47.60px;top:303.50px;height:10.69px;line-height:10.69px">  <span class="i">requestAnimationFrame</span><span class="o">(</span> <span class="i">animate</span> <span class="o">);</span></div>
<div class="ln" style="left:12.90px;top:314.88px;height:10.69px;line-height:10.69px;">116</div>
<div class="code" style="left:47.60px;top:314.19px;height:10.69px;line-height:10.69px">  <span class="i">renderer</span><span class="o">.</span><span class="p">render</span><span class="o">(</span> <span class="i">scene</span><span class="o">,</span> <span class="i">camera</span> <span class="o">);</span></div>
<div class="ln" style="left:12.90px;top:325.57px;height:10.69px;line-height:10.69px;">117</div>
<div class="code" style="left:47.60px;top:324.88px;height:10.69px;line-height:10.69px"><span class="o">}</span></div>
<div class="ln" style="left:12.90px;top:336.26px;height:10.69px;line-height:10.69px;">118</div>
<div class="code" style="left:47.60px;top:335.56px;height:10.69px;line-height:10.69px"></div>
<div class="ln" style="left:12.90px;top:346.95px;height:10.69px;line-height:10.69px;">119</div>
<div class="code" style="left:47.60px;top:346.25px;height:10.69px;line-height:10.69px"><span class="c">// interactions below</span></div>
<div class="ln" style="left:12.90px;top:357.64px;height:10.69px;line-height:10.69px;">120</div>
<div class="code" style="left:47.60px;top:356.94px;height:10.69px;line-height:10.69px"><span class="i">animate</span><span class="o">()</span></div>
<div class="ln" style="left:12.90px;top:368.33px;height:10.69px;line-height:10.69px;">121</div>
<div class="code" style="left:47.60px;top:367.63px;height:10.69px;line-height:10.69px"><span class="i">update</span><span class="o">()</span></div>
<div class="ln" style="left:12.90px;top:379.02px;height:10.69px;line-height:10.69px;">122</div>
<div class="code" style="left:47.60px;top:378.32px;height:10.69px;line-height:10.69px"></div>
<div class="ln" style="left:12.90px;top:389.71px;height:10.69px;line-height:10.69px;">123</div>
<div class="code" style="left:47.60px;top:389.01px;height:10.69px;line-height:10.69px"><span class="i">prevTag</span><span class="o">.</span><span class="p">addEventListener</span><span class="o">(</span><span class="s">&quot;click&quot;</span><span class="o">,</span> <span class="k">function</span> <span class="o">(</span><span class="d">event</span><span class="o">) {</span></div>
<div class="ln" style="left:12.90px;top:400.40px;height:10.69px;line-height:10.69px;">124</div>
<div class="code" style="left:47.60px;top:399.70px;height:10.69px;line-height:10.69px">  <span class="i">event</span><span class="o">.</span><span class="p">preventDefault</span><span class="o">()</span></div>
<div class="ln" style="left:12.90px;top:411.09px;height:10.69px;line-height:10.69px;">125</div>
<div class="code" style="left:47.60px;top:410.39px;height:10.69px;line-height:10.69px">  <span class="i">prev</span><span class="o">()</span></div>
<div class="ln" style="left:12.90px;top:421.78px;height:10.69px;line-height:10.69px;">126</div>
<div class="code" style="left:47.60px;top:421.08px;height:10.69px;line-height:10.69px"><span class="o">})</span></div>
<div style="left:36.3px;top:19px;width:0.6px;height:413px;background:#ececf0"></div>
<svg style="left:61.3px;top:268.8px" width="63" height="2" viewBox="0 0 63 2"><path d="M0 1l1 -0.8l1 0.8l1 -0.8l1 0.8l1 -0.8l1 0.8l1 -0.8l1 0.8l1 -0.8l1 0.8l1 -0.8l1 0.8l1 -0.8l1 0.8l1 -0.8l1 0.8l1 -0.8l1 0.8l1 -0.8l1 0.8l1 -0.8l1 0.8l1 -0.8l1 0.8l1 -0.8l1 0.8l1 -0.8l1 0.8l1 -0.8l1 0.8l1 -0.8l1 0.8l1 -0.8l1 0.8l1 -0.8l1 0.8l1 -0.8l1 0.8l1 -0.8l1 0.8l1 -0.8l1 0.8l1 -0.8l1 0.8l1 -0.8l1 0.8l1 -0.8l1 0.8l1 -0.8l1 0.8l1 -0.8l1 0.8l1 -0.8l1 0.8l1 -0.8l1 0.8l1 -0.8l1 0.8l1 -0.8l1 0.8l1 -0.8l1 0.8l1 -0.8" stroke="#e07070" stroke-width="0.45" fill="none"/></svg>
<div style="left:110.7px;top:259.5px;width:0.9px;height:8.2px;background:#2a2a7a"></div>
<div style="left:0;top:0;width:352px;height:19.6px;background:#fff"></div>
<span class="t" style="left:10.3px;top:7.6px;font-size:4.6px;font-weight:bold;color:#2b2a8a">slides.js</span>
<svg style="left:289.700px;top:6.700px" width="5.200" height="5.200" viewBox="0 0 10 10"><circle cx="5" cy="5" r="4.600" fill="#d42a38"/><circle cx="5" cy="5" r="1.600" fill="#e85560"/></svg>
<span class="t" style="left:296.800px;top:7.700px;font-size:4.300px;color:#707074;-webkit-text-stroke:0.15px #707074">1</span>
<svg style="left:300.300px;top:7.200px" width="7" height="4.800" viewBox="0 0 14 9.600"><path d="M7 0.300Q8 0.300 13.500 9.300H0.500Q6 0.300 7 0.300z" fill="#ecd46a"/></svg>
<span class="t" style="left:308px;top:7.700px;font-size:4.300px;color:#dde2a8">1</span>
<svg style="left:318px;top:5.5px" width="8" height="8" viewBox="0 0 16 16"><path d="M3 13.500L11 4" stroke="#555" stroke-width="2" stroke-linecap="round"/><path d="M4.600 1.300v2M3.600 2.300h2M13.500 2.800v2.400M12.300 4h2.400M12.500 9v2M11.500 10h2" stroke="#a8a8a8" stroke-width="0.8"/></svg>
<div style="left:332.7px;top:6px;width:9.9px;height:6.7px;background:#0a0a0a"></div>
<div style="left:333.5px;top:7.3px;width:8.3px;height:2px;background:#f4f4f4"></div>
<div style="left:333.7px;top:7.5px;width:3px;height:1.6px;background:#9a9a9a"></div>
<div style="left:336px;top:10.4px;width:2.6px;height:1.4px;background:#555"></div>
</div>
<div id="preview">
<div style="left:0;top:0;width:352px;height:19.3px;background:#f1f1f3"></div>
<div style="left:9.3px;top:4.7px;width:309px;height:10.4px;border-radius:5.2px;background:#fff"></div>
<span class="t" style="left:15px;top:8.1px;font-size:4.3px;color:#222;-webkit-text-stroke:0.12px #222">index.html</span>
<svg style="left:322.5px;top:7px" width="6" height="6" viewBox="0 0 12 12"><path d="M11 6H2.500M6.500 2L2.500 6l4 4" stroke="#a8a8a8" stroke-width="2.600" fill="none"/></svg>
<svg style="left:333.5px;top:7px" width="6" height="6" viewBox="0 0 12 12"><path d="M1 6h8.500M5.500 2l4 4-4 4" stroke="#a8a8a8" stroke-width="2.600" fill="none"/></svg>
<div style="left:249.5px;top:409px;width:77.5px;height:12.8px;border-radius:6.4px;background:#2121dd"></div>
<span class="t" style="left:256.5px;top:414.1px;font-size:4.3px;color:#c4c4f4">Ask a question</span>
<div style="left:329px;top:409px;width:12.8px;height:12.8px;border-radius:50%;background:#2121dd"></div>
<svg style="left:330.4px;top:410.4px" width="11" height="11" viewBox="0 0 22 22"><circle cx="7.500" cy="8" r="1.700" fill="#fff"/><circle cx="14.500" cy="8" r="1.700" fill="#fff"/><path d="M4.500 11.500Q11 19.500 17.500 11.500" stroke="#fff" stroke-width="2.300" fill="none" stroke-linecap="round"/></svg>
</div>
</div>
</div>
</div></body></html>
